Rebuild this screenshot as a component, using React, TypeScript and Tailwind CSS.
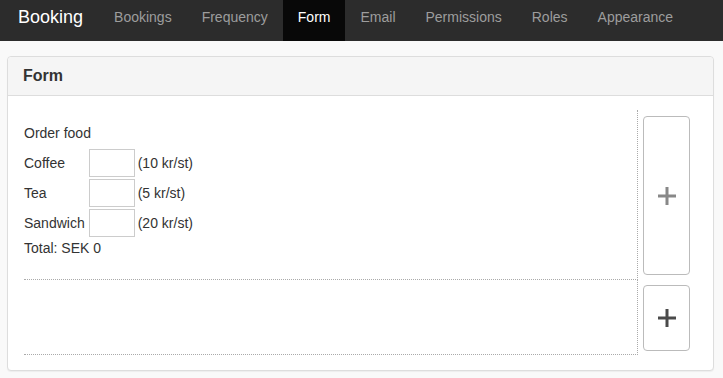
import React from "react";

const navItems = ["Bookings", "Frequency", "Form", "Email", "Permissions", "Roles", "Appearance"];

const products = [
  { name: "Coffee", price: "(10 kr/st)" },
  { name: "Tea", price: "(5 kr/st)" },
  { name: "Sandwich", price: "(20 kr/st)" },
];

function Plus({ color }: { color: string }) {
  return (
    <svg width="18" height="18" viewBox="0 0 18 18">
      <rect x="7.5" y="0" width="3" height="18" fill={color} />
      <rect x="0" y="7.5" width="18" height="3" fill={color} />
    </svg>
  );
}

export default function App() {
  return (
    <div className="min-h-screen bg-[#f9f9f9] font-['Liberation_Sans',Arial,sans-serif] text-[#333]">
      {/* top navbar */}
      <nav className="flex h-[41px] bg-[#2c2c2c]">
        <div className="pl-[18px] pr-[16px] pt-[7px] text-[18px] leading-[20px] text-white">Booking</div>
        {navItems.map((item) => (
          <div
            key={item}
            className={
              item === "Form"
                ? "h-full bg-[#080808] px-[15px] pt-[7px] text-[14px] leading-[20px] text-white"
                : "h-full px-[15px] pt-[7px] text-[14px] leading-[20px] text-[#9d9d9d]"
            }
          >
            {item}
          </div>
        ))}
      </nav>

      {/* panel */}
      <div className="ml-[7px] mt-[15px] w-[707px] rounded-[4px] border border-[#ddd] bg-white shadow-[0_1px_1px_rgba(0,0,0,0.05)]">
        <div className="flex h-[39px] items-center rounded-t-[4px] border-b border-[#ddd] bg-[#f5f5f5] px-[15px] text-[16px] font-bold">
          Form
        </div>
        <div className="pb-[15px] pl-4 pr-[23px] pt-[14px] text-[14px] leading-[20px]">
          {/* first row */}
          <div className="flex h-[170px]">
            <div className="flex-1 border-b border-r border-dotted border-[#aaa] pt-[13px]">
              <div>Order food</div>
              <table className="mt-[5px] border-collapse">
                <tbody>
                  {products.map((p) => (
                    <tr key={p.name}>
                      <td className="p-0 pr-[3px] align-middle">{p.name}</td>
                      <td className="py-[1px] pl-[1px] align-middle">
                        <input className="block h-[28px] w-[46px] border border-[#ccc] bg-white outline-none" />
                      </td>
                      <td className="pl-[3px] align-middle">{p.price}</td>
                    </tr>
                  ))}
                </tbody>
              </table>
              <div>Total: SEK 0</div>
            </div>
            <button className="ml-[5px] mt-[6px] flex h-[159px] w-[47px] items-center justify-center rounded-[4px] border border-[#bbb] bg-white">
              <Plus color="#888" />
            </button>
          </div>

          {/* second row */}
          <div className="flex h-[75px]">
            <div className="flex-1 border-b border-r border-dotted border-[#aaa]" />
            <button className="ml-[5px] mt-[5px] flex h-[66px] w-[47px] items-center justify-center rounded-[4px] border border-[#bbb] bg-white">
              <Plus color="#4a4a4a" />
            </button>
          </div>
        </div>
      </div>
    </div>
  );
}
